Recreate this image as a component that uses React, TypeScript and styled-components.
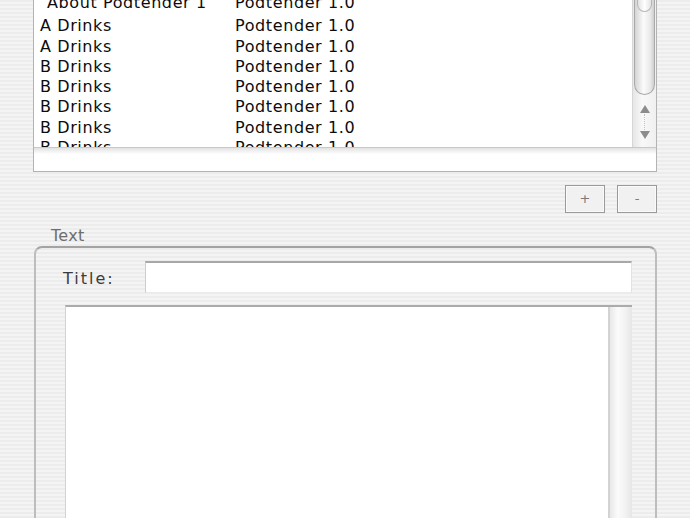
import React from 'react';
import styled, { createGlobalStyle } from 'styled-components';

const GlobalStyle = createGlobalStyle`
  html, body {
    margin: 0;
    padding: 0;
  }
  body {
    font-family: "DejaVu Sans", Verdana, sans-serif;
  }
  * {
    box-sizing: border-box;
  }
`;

const pinstripes = `repeating-linear-gradient(180deg, #ececec 0px, #ececec 2px, #f4f4f4 2px, #f4f4f4 4px)`;

const Window = styled.div`
  width: 690px;
  height: 518px;
  overflow: hidden;
  background: ${pinstripes};
  padding: 0 33px;
  display: flex;
  flex-direction: column;
`;

const ListBox = styled.div`
  margin-top: -7px;
  border: 1px solid #b3b3b3;
  border-top: none;
  background: #fff;
  display: flex;
  flex-direction: column;
`;

const TableArea = styled.div`
  display: flex;
  height: 154px;
`;

const Rows = styled.div`
  flex: 1;
  overflow: hidden;
  font-size: 16px;
  letter-spacing: 0.6px;
  color: #0c0c0c;
`;

const Row = styled.div<{ $first?: boolean }>`
  display: grid;
  grid-template-columns: 195px 1fr;
  height: ${({ $first }) => ($first ? '23.3px' : '20.3px')};
  line-height: 20.3px;
  padding-left: 6px;
  white-space: nowrap;
`;

const Cell = styled.span<{ $indent?: boolean }>`
  padding-left: ${({ $indent }) => ($indent ? '7px' : '0')};
`;

const VScroll = styled.div`
  width: 24px;
  display: flex;
  flex-direction: column;
  border-left: 1px solid #d6d6d6;
  background: linear-gradient(90deg, #e6e6e6, #f8f8f8 40%, #f0f0f0);
`;

const Thumb = styled.div`
  position: relative;
  height: 102px;
  margin: 0 1px;
  border: 1px solid #a9a9a9;
  border-top: none;
  border-radius: 0 0 11px 11px;
  background: linear-gradient(90deg, #d4d4d4, #fbfbfb 45%, #e9e9e9 80%, #cfcfcf);

  &::before {
    content: '';
    position: absolute;
    left: 2px;
    right: 2px;
    top: 0;
    height: 18px;
    border: 1px solid #b5b5b5;
    border-top: none;
    border-radius: 0 0 9px 9px;
    background: linear-gradient(90deg, #e2e2e2, #ffffff 50%, #e4e4e4);
  }
`;

const Arrows = styled.div`
  flex: 1;
  display: flex;
  flex-direction: column;
  align-items: center;
  padding-top: 10px;
`;

const Arrow = styled.div<{ $down?: boolean }>`
  width: 0;
  height: 0;
  border-left: 5px solid transparent;
  border-right: 5px solid transparent;
  ${({ $down }) =>
    $down ? 'border-top: 8px solid #8c8c8c;' : 'border-bottom: 8px solid #8c8c8c;'}
`;

const ArrowSep = styled.div`
  width: 1px;
  height: 16px;
  margin: 1px 0;
  border-left: 1px dotted #c4c4c4;
`;

const BottomStrip = styled.div`
  height: 24px;
  border-top: 1px solid #c8c8c8;
  background: linear-gradient(180deg, #e2e2e2 0px, #ffffff 6px);
`;

const ButtonBar = styled.div`
  display: flex;
  justify-content: flex-end;
  gap: 12px;
  margin-top: 13px;
`;

const SmallButton = styled.button`
  width: 40px;
  height: 28px;
  padding: 0;
  border: 1px solid #9a9a9a;
  background: #f1f1f1;
  box-shadow: inset 0 0 0 1px #fafafa;
  color: #7a7a7a;
  font-family: "DejaVu Sans", Verdana, sans-serif;
  font-size: 13px;
  line-height: 26px;
  text-align: center;
`;

const GroupTitle = styled.div`
  margin: 13px 0 0 18px;
  height: 20px;
  line-height: 20px;
  font-size: 16px;
  letter-spacing: 0.3px;
  color: #6e6e6e;
`;

const GroupBox = styled.div`
  margin-left: 1px;
  height: 400px;
  border: 2px solid #bdbdbd;
  border-top-color: #a3a3a3;
  border-radius: 8px;
  padding: 13px 23px 0 29px;
  display: flex;
  flex-direction: column;
`;

const FieldRow = styled.div`
  display: flex;
  align-items: center;
  height: 32px;
`;

const FieldLabel = styled.label`
  width: 82px;
  margin-left: -2px;
  padding-top: 3px;
  font-size: 16px;
  letter-spacing: 2px;
  color: #3c3c3c;
`;

const TextField = styled.div`
  flex: 1;
  height: 32px;
  background: #fff;
  border-top: 2px solid #a8a8a8;
  border-left: 1px solid #cdcdcd;
  border-right: 1px solid #e2e2e2;
  border-bottom: 1px solid #ebebeb;
`;

const TextArea = styled.div`
  margin-top: 12px;
  height: 300px;
  display: flex;
  background: #fff;
  border-top: 2px solid #ababab;
  border-left: 1px solid #d2d2d2;
`;

const TextContent = styled.div`
  flex: 1;
`;

const TextScroll = styled.div`
  width: 24px;
  border-left: 2px solid #d3d3d3;
  background: linear-gradient(90deg, #e8e8e8, #fbfbfb 35%, #f2f2f2 70%, #e6e6e6);
`;

const rows: [string, string][] = [
  ['About Podtender 1', 'Podtender 1.0'],
  ['A Drinks', 'Podtender 1.0'],
  ['A Drinks', 'Podtender 1.0'],
  ['B Drinks', 'Podtender 1.0'],
  ['B Drinks', 'Podtender 1.0'],
  ['B Drinks', 'Podtender 1.0'],
  ['B Drinks', 'Podtender 1.0'],
  ['B Drinks', 'Podtender 1.0'],
];

export default function App() {
  return (
    <>
      <GlobalStyle />
      <Window>
        <ListBox>
          <TableArea>
            <Rows>
              {rows.map(([name, source], i) => (
                <Row key={i} $first={i === 0}>
                  <Cell $indent={i === 0}>{name}</Cell>
                  <Cell>{source}</Cell>
                </Row>
              ))}
            </Rows>
            <VScroll>
              <Thumb />
              <Arrows>
                <Arrow />
                <ArrowSep />
                <Arrow $down />
              </Arrows>
            </VScroll>
          </TableArea>
          <BottomStrip />
        </ListBox>

        <ButtonBar>
          <SmallButton>+</SmallButton>
          <SmallButton>-</SmallButton>
        </ButtonBar>

        <GroupTitle>Text</GroupTitle>
        <GroupBox>
          <FieldRow>
            <FieldLabel>Title:</FieldLabel>
            <TextField />
          </FieldRow>
          <TextArea>
            <TextContent />
            <TextScroll />
          </TextArea>
        </GroupBox>
      </Window>
    </>
  );
}
